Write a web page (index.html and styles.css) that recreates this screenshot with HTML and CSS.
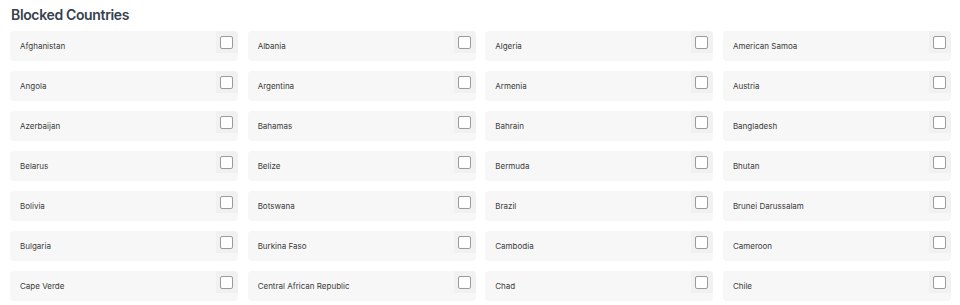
FILE: index.html
```html
<!DOCTYPE html>
<html lang="en">
<head>
  <meta charset="UTF-8">
  <meta name="viewport" content="width=device-width, initial-scale=1.0">
  <title>Blocked Countries</title>
  <link rel="stylesheet" href="styles.css">
</head>
<body>
<div class="section">
  <h2>Blocked Countries</h2>
  <div class="country-grid">
    <label class="country"><span>Afghanistan</span><span class="check-box"><input type="checkbox"></span></label>
    <label class="country"><span>Albania</span><span class="check-box"><input type="checkbox"></span></label>
    <label class="country"><span>Algeria</span><span class="check-box"><input type="checkbox"></span></label>
    <label class="country"><span>American Samoa</span><span class="check-box"><input type="checkbox"></span></label>

    <label class="country"><span>Angola</span><span class="check-box"><input type="checkbox"></span></label>
    <label class="country"><span>Argentina</span><span class="check-box"><input type="checkbox"></span></label>
    <label class="country"><span>Armenia</span><span class="check-box"><input type="checkbox"></span></label>
    <label class="country"><span>Austria</span><span class="check-box"><input type="checkbox"></span></label>

    <label class="country"><span>Azerbaijan</span><span class="check-box"><input type="checkbox"></span></label>
    <label class="country"><span>Bahamas</span><span class="check-box"><input type="checkbox"></span></label>
    <label class="country"><span>Bahrain</span><span class="check-box"><input type="checkbox"></span></label>
    <label class="country"><span>Bangladesh</span><span class="check-box"><input type="checkbox"></span></label>

    <label class="country"><span>Belarus</span><span class="check-box"><input type="checkbox"></span></label>
    <label class="country"><span>Belize</span><span class="check-box"><input type="checkbox"></span></label>
    <label class="country"><span>Bermuda</span><span class="check-box"><input type="checkbox"></span></label>
    <label class="country"><span>Bhutan</span><span class="check-box"><input type="checkbox"></span></label>

    <label class="country"><span>Bolivia</span><span class="check-box"><input type="checkbox"></span></label>
    <label class="country"><span>Botswana</span><span class="check-box"><input type="checkbox"></span></label>
    <label class="country"><span>Brazil</span><span class="check-box"><input type="checkbox"></span></label>
    <label class="country"><span>Brunei Darussalam</span><span class="check-box"><input type="checkbox"></span></label>

    <label class="country"><span>Bulgaria</span><span class="check-box"><input type="checkbox"></span></label>
    <label class="country"><span>Burkina Faso</span><span class="check-box"><input type="checkbox"></span></label>
    <label class="country"><span>Cambodia</span><span class="check-box"><input type="checkbox"></span></label>
    <label class="country"><span>Cameroon</span><span class="check-box"><input type="checkbox"></span></label>

    <label class="country"><span>Cape Verde</span><span class="check-box"><input type="checkbox"></span></label>
    <label class="country"><span>Central African Republic</span><span class="check-box"><input type="checkbox"></span></label>
    <label class="country"><span>Chad</span><span class="check-box"><input type="checkbox"></span></label>
    <label class="country"><span>Chile</span><span class="check-box"><input type="checkbox"></span></label>
  </div>
</div>
</body>
</html>
```

FILE: styles.css
```css
* {
  box-sizing: border-box;
  margin: 0;
  padding: 0;
  font-family: Inter, 'Noto Sans', sans-serif;
}

body {
  background: #ffffff;
  color: #333333;
}

.section {
  padding: 4px 9px 0 10px;
}

h2 {
  font-size: 14px;
  font-weight: 600;
  letter-spacing: -0.35px;
  color: #36414e;
  line-height: 21px;
  margin-left: 1px;
  margin-bottom: 6px;
}

.country-grid {
  display: grid;
  grid-template-columns: repeat(4, 1fr);
  column-gap: 9.5px;
  row-gap: 10px;
}

.country {
  display: flex;
  justify-content: space-between;
  align-items: flex-start;
  height: 30px;
  background: #f7f7f7;
  border-radius: 4px;
  padding-left: 10px;
  cursor: pointer;
}

.country span:first-child {
  font-size: 8px;
  line-height: 30px;
  color: #3a3a3a;
}

.check-box {
  display: flex;
  width: 22px;
  height: 22px;
  padding: 5px 5px 4px 4px;
  background: #f1f1f1;
  border-radius: 0 4px 0 0;
}

.check-box input {
  appearance: none;
  width: 13px;
  height: 13px;
  margin: 0;
  background: #ffffff;
  border: 1px solid #9a9a9a;
  border-radius: 2px;
  cursor: pointer;
}

.check-box input:checked {
  background: #4f46e5;
  border-color: #4f46e5;
}
```
